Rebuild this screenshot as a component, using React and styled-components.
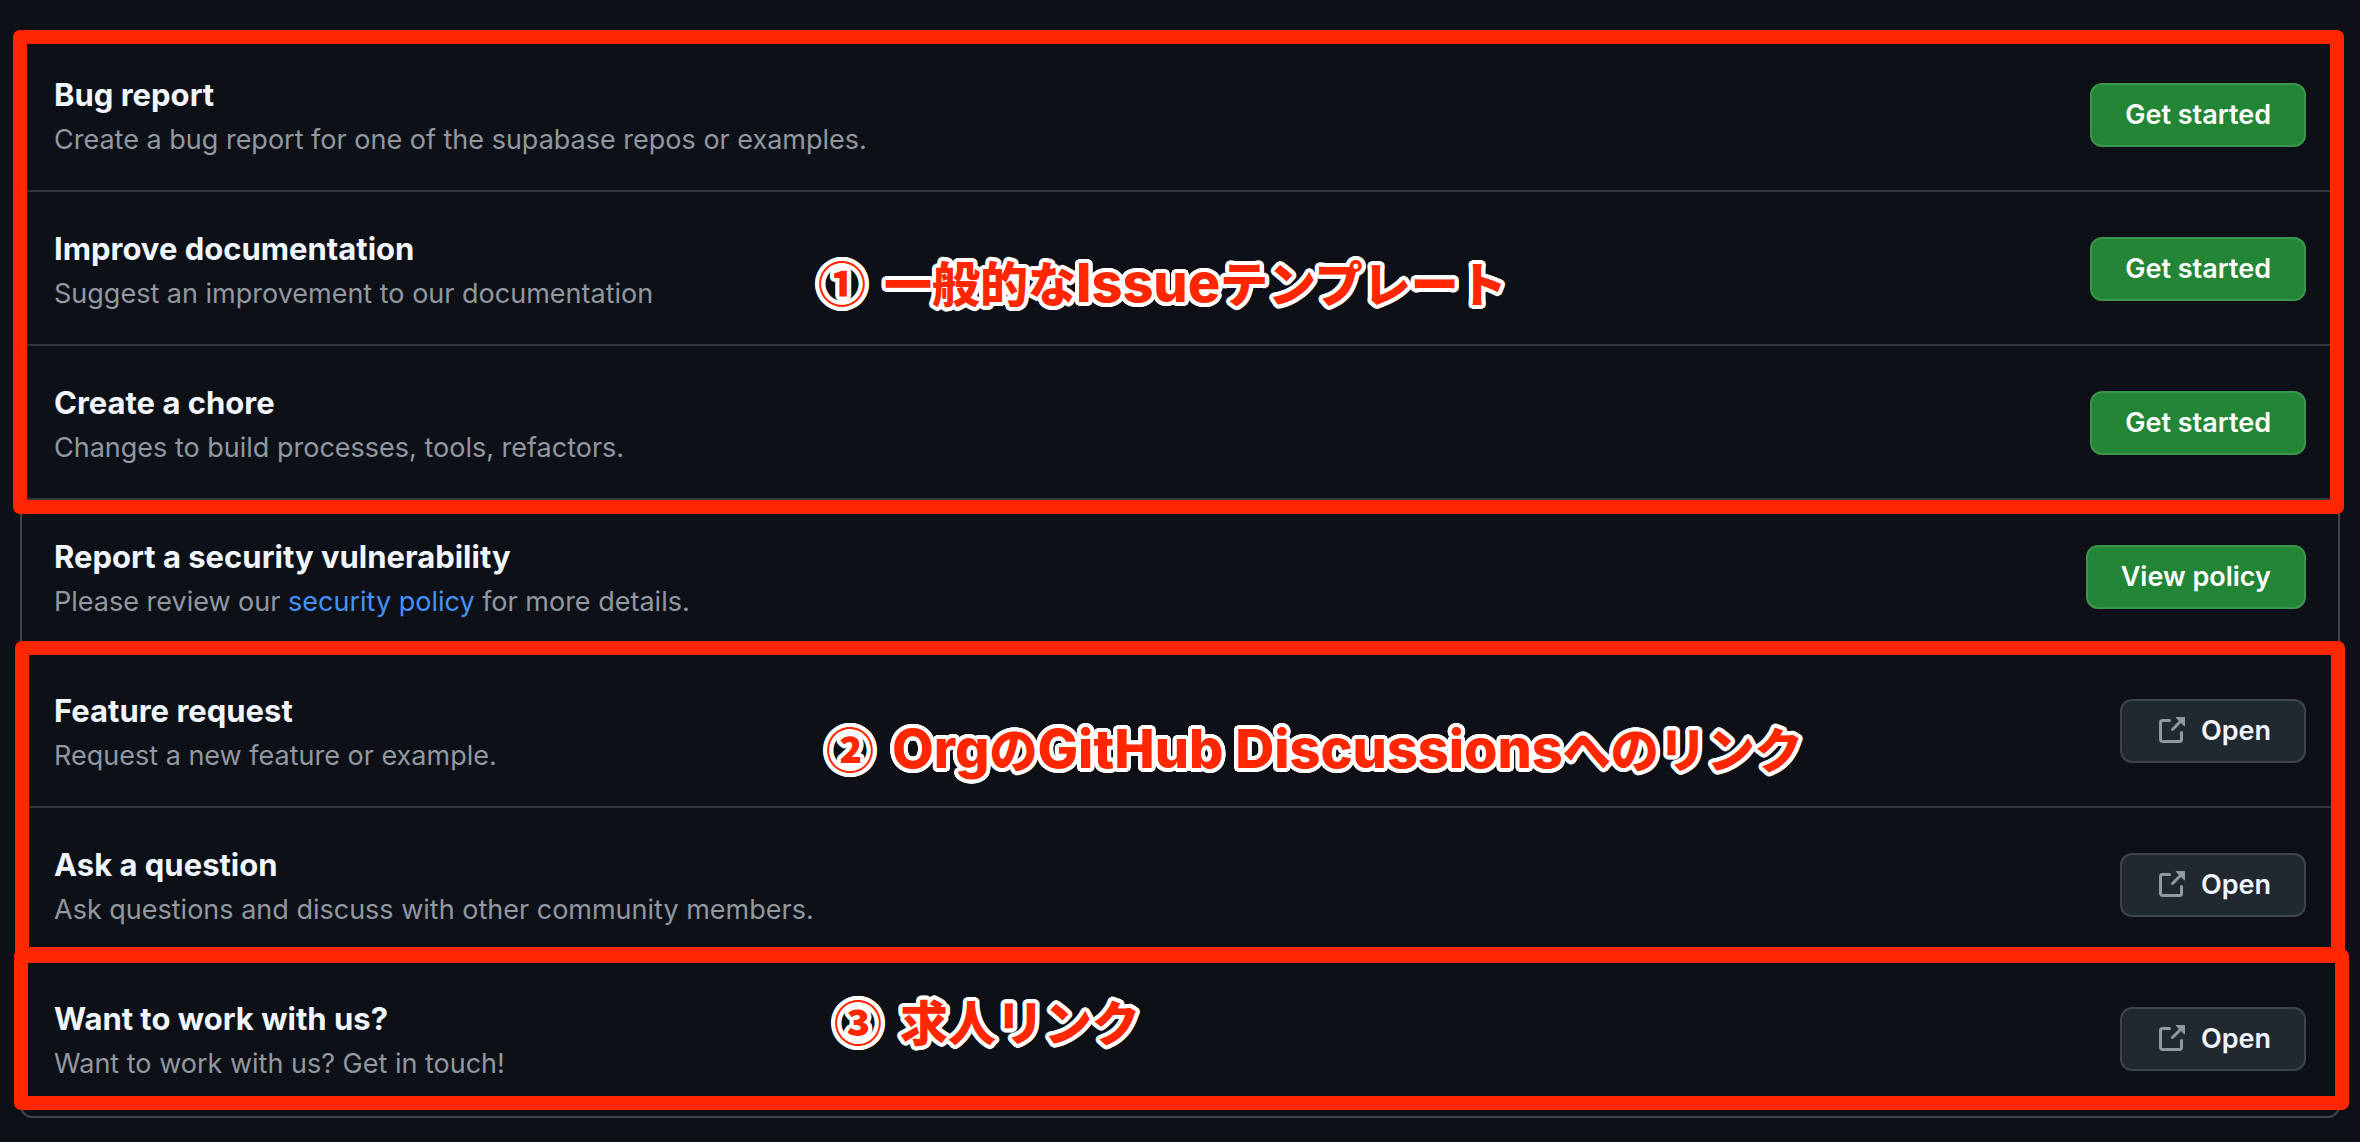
import React from "react";
import styled, { createGlobalStyle } from "styled-components";

const GlobalStyle = createGlobalStyle`
  *, *::before, *::after { box-sizing: border-box; }
  body {
    margin: 0;
    background: #0d1117;
    color: #f0f6fc;
    font-family: Inter, "Noto Sans CJK JP", sans-serif;
    font-size: 27px;
  }
`;

const Page = styled.main`
  padding: 36px 20px 24px;
`;

const TemplateBox = styled.div`
  border: 2px solid #3d444d;
  border-radius: 12px;
`;

const Group = styled.section`
  position: relative;

  & + & {
    border-top: 2px solid #2f363e;
  }
`;

const List = styled.ul`
  list-style: none;
  margin: 0;
  padding: 0;
`;

const Row = styled.li`
  display: flex;
  align-items: center;
  justify-content: space-between;
  gap: 32px;
  padding: 32px 32px 30px;

  & + & {
    border-top: 2px solid #2f363e;
  }

  ${Group}:last-child &:last-child {
    padding-bottom: 32px;
  }
`;

const Title = styled.h3`
  margin: 0;
  font-size: 31px;
  font-weight: 700;
  line-height: 50px;
`;

const Description = styled.p`
  margin: 0;
  color: #9198a1;
  line-height: 40px;
`;

const PolicyLink = styled.a`
  color: #4493f8;
  text-decoration: none;
`;

const Button = styled.button`
  display: inline-flex;
  align-items: center;
  flex: none;
  gap: 14px;
  height: 64px;
  padding: 0 33px;
  border: 2px solid ${(p) => (p.$primary ? "#3c9549" : "#3d444d")};
  border-radius: 12px;
  background: ${(p) => (p.$primary ? "#238636" : "#212830")};
  color: ${(p) => (p.$primary ? "#ffffff" : "#f0f6fc")};
  font-family: inherit;
  font-size: 27px;
  font-weight: 600;
  line-height: 40px;
  cursor: pointer;
`;

const Icon = styled.svg`
  width: 32px;
  height: 32px;
  fill: #9198a1;
`;

const Frame = styled.div`
  position: absolute;
  z-index: 1;
  inset: ${(p) => p.$inset};
  border: 14px solid #ff2600;
  border-radius: 7px;
  pointer-events: none;
`;

// A ring of hard shadows gives the lettering a round white outline.
const OUTLINE = 4;
const outlineShadow = Array.from({ length: 24 }, (_, i) => {
  const angle = (i / 24) * Math.PI * 2;
  const x = (Math.cos(angle) * OUTLINE).toFixed(2);
  const y = (Math.sin(angle) * OUTLINE).toFixed(2);
  return `${x}px ${y}px 0 #ffffff`;
}).join(", ");

const Note = styled.p`
  position: absolute;
  z-index: 2;
  top: ${(p) => p.$top}px;
  left: ${(p) => p.$left}px;
  display: flex;
  gap: 18px;
  margin: 0;
  color: #ff2600;
  font-family: "Noto Sans CJK JP", sans-serif;
  font-size: 48px;
  font-weight: 900;
  line-height: 72px;
  white-space: nowrap;
  text-shadow: ${outlineShadow};
  pointer-events: none;
`;

const Latin = styled.span`
  font-family: Inter, sans-serif;
  font-size: 54px;
  font-weight: 800;
`;

const ExternalIcon = () => (
  <Icon viewBox="0 0 16 16" aria-hidden="true">
    <path d="M10.604 1h4.146a.25.25 0 01.25.25v4.146a.25.25 0 01-.427.177L13.03 4.03 9.28 7.78a.75.75 0 01-1.06-1.06l3.75-3.75-1.543-1.543A.25.25 0 0110.604 1zM3.75 2A1.75 1.75 0 002 3.75v8.5c0 .966.784 1.75 1.75 1.75h8.5A1.75 1.75 0 0014 12.25v-3.5a.75.75 0 00-1.5 0v3.5a.25.25 0 01-.25.25h-8.5a.25.25 0 01-.25-.25v-8.5a.25.25 0 01.25-.25h3.5a.75.75 0 000-1.5h-3.5z" />
  </Icon>
);

const groups = [
  {
    frame: "-8px -6px -16px -9px",
    note: { top: 207, left: 796, mark: "①", content: <>一般的な<Latin>Issue</Latin>テンプレート</> },
    rows: [
      { title: "Bug report", text: "Create a bug report for one of the supabase repos or examples.", action: "Get started" },
      { title: "Improve documentation", text: "Suggest an improvement to our documentation", action: "Get started" },
      { title: "Create a chore", text: "Changes to build processes, tools, refactors.", action: "Get started" },
    ],
  },
  {
    rows: [
      {
        title: "Report a security vulnerability",
        text: <>Please review our <PolicyLink href="#policy">security policy</PolicyLink> for more details.</>,
        action: "View policy",
      },
    ],
  },
  {
    frame: "-13px -7px -1px -7px",
    note: { top: 57, left: 804, mark: "②", content: <><Latin>Org</Latin>の<Latin>GitHub Discussions</Latin>へのリンク</> },
    rows: [
      { title: "Feature request", text: "Request a new feature or example.", action: "Open", external: true },
      { title: "Ask a question", text: "Ask questions and discuss with other community members.", action: "Open", external: true },
    ],
  },
  {
    frame: "-13px -11px 6px -8px",
    note: { top: 22, left: 812, mark: "③", content: "求人リンク" },
    rows: [
      { title: "Want to work with us?", text: "Want to work with us? Get in touch!", action: "Open", external: true },
    ],
  },
];

export default function App() {
  return (
    <>
      <GlobalStyle />
      <Page>
        <TemplateBox>
          {groups.map((group, i) => (
            <Group key={i}>
              <List>
                {group.rows.map((row) => (
                  <Row key={row.title}>
                    <div>
                      <Title>{row.title}</Title>
                      <Description>{row.text}</Description>
                    </div>
                    <Button type="button" $primary={!row.external}>
                      {row.external && <ExternalIcon />}
                      {row.action}
                    </Button>
                  </Row>
                ))}
              </List>
              {group.frame && <Frame $inset={group.frame} />}
              {group.note && (
                <Note $top={group.note.top} $left={group.note.left}>
                  <span>{group.note.mark}</span>
                  <span>{group.note.content}</span>
                </Note>
              )}
            </Group>
          ))}
        </TemplateBox>
      </Page>
    </>
  );
}
